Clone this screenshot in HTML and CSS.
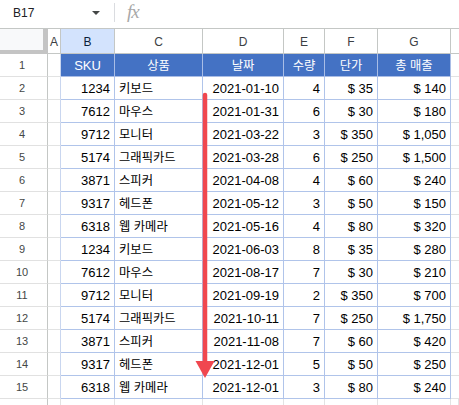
FILE: index.html
```html
<!DOCTYPE html>
<html lang="ko">
<head>
<meta charset="utf-8">
<title>Sheet</title>
<link rel="stylesheet" href="styles.css">
</head>
<body>
<div class="page">
  <div class="topbar">
    <div class="namebox">B17</div>
    <div class="dropdown"></div>
    <div class="sep"></div>
    <div class="fx">fx</div>
  </div>
  <div class="grid">
    <div class="corner"></div>
    <div class="colh">A</div>
    <div class="colh sel">B</div>
    <div class="colh">C</div>
    <div class="colh">D</div>
    <div class="colh">E</div>
    <div class="colh">F</div>
    <div class="colh">G</div>
    <div class="colh last"></div>

    <div class="rh">1</div><div class="ac"></div>
    <div class="th">SKU</div><div class="th ko">상품</div><div class="th ko">날짜</div><div class="th ko">수량</div><div class="th ko">단가</div><div class="th ko">총 매출</div>
    <div class="hc"></div>

    <div class="rh">2</div><div class="ac"></div><div class="td n">1234</div><div class="td t ko">키보드</div><div class="td n">2021-01-10</div><div class="td n">4</div><div class="td n">$ 35</div><div class="td n">$ 140</div><div class="hc"></div>
    <div class="rh">3</div><div class="ac"></div><div class="td n">7612</div><div class="td t ko">마우스</div><div class="td n">2021-01-31</div><div class="td n">6</div><div class="td n">$ 30</div><div class="td n">$ 180</div><div class="hc"></div>
    <div class="rh">4</div><div class="ac"></div><div class="td n">9712</div><div class="td t ko">모니터</div><div class="td n">2021-03-22</div><div class="td n">3</div><div class="td n">$ 350</div><div class="td n">$ 1,050</div><div class="hc"></div>
    <div class="rh">5</div><div class="ac"></div><div class="td n">5174</div><div class="td t ko">그래픽카드</div><div class="td n">2021-03-28</div><div class="td n">6</div><div class="td n">$ 250</div><div class="td n">$ 1,500</div><div class="hc"></div>
    <div class="rh">6</div><div class="ac"></div><div class="td n">3871</div><div class="td t ko">스피커</div><div class="td n">2021-04-08</div><div class="td n">4</div><div class="td n">$ 60</div><div class="td n">$ 240</div><div class="hc"></div>
    <div class="rh">7</div><div class="ac"></div><div class="td n">9317</div><div class="td t ko">헤드폰</div><div class="td n">2021-05-12</div><div class="td n">3</div><div class="td n">$ 50</div><div class="td n">$ 150</div><div class="hc"></div>
    <div class="rh">8</div><div class="ac"></div><div class="td n">6318</div><div class="td t ko">웹 카메라</div><div class="td n">2021-05-16</div><div class="td n">4</div><div class="td n">$ 80</div><div class="td n">$ 320</div><div class="hc"></div>
    <div class="rh">9</div><div class="ac"></div><div class="td n">1234</div><div class="td t ko">키보드</div><div class="td n">2021-06-03</div><div class="td n">8</div><div class="td n">$ 35</div><div class="td n">$ 280</div><div class="hc"></div>
    <div class="rh">10</div><div class="ac"></div><div class="td n">7612</div><div class="td t ko">마우스</div><div class="td n">2021-08-17</div><div class="td n">7</div><div class="td n">$ 30</div><div class="td n">$ 210</div><div class="hc"></div>
    <div class="rh">11</div><div class="ac"></div><div class="td n">9712</div><div class="td t ko">모니터</div><div class="td n">2021-09-19</div><div class="td n">2</div><div class="td n">$ 350</div><div class="td n">$ 700</div><div class="hc"></div>
    <div class="rh">12</div><div class="ac"></div><div class="td n">5174</div><div class="td t ko">그래픽카드</div><div class="td n">2021-10-11</div><div class="td n">7</div><div class="td n">$ 250</div><div class="td n">$ 1,750</div><div class="hc"></div>
    <div class="rh">13</div><div class="ac"></div><div class="td n">3871</div><div class="td t ko">스피커</div><div class="td n">2021-11-08</div><div class="td n">7</div><div class="td n">$ 60</div><div class="td n">$ 420</div><div class="hc"></div>
    <div class="rh">14</div><div class="ac"></div><div class="td n">9317</div><div class="td t ko">헤드폰</div><div class="td n">2021-12-01</div><div class="td n">5</div><div class="td n">$ 50</div><div class="td n">$ 250</div><div class="hc"></div>
    <div class="rh">15</div><div class="ac"></div><div class="td n">6318</div><div class="td t ko">웹 카메라</div><div class="td n">2021-12-01</div><div class="td n">3</div><div class="td n">$ 80</div><div class="td n">$ 240</div><div class="hc"></div>

    <div class="rh"></div><div class="gc"></div><div class="gc"></div><div class="gc"></div><div class="gc"></div><div class="gc"></div><div class="gc"></div><div class="gc"></div><div class="gc"></div>
  </div>
  <svg class="arrow" width="24" height="292" viewBox="0 0 24 292" aria-hidden="true">
    <line x1="12" y1="6" x2="12" y2="275" stroke="#f0474f" stroke-width="4.5" stroke-linecap="round"/>
    <polygon points="2.5,272 21.5,272 12,289" fill="#f0474f"/>
  </svg>
</div>
</body>
</html>
```
FILE: styles.css
```css
html, body {
  margin: 0;
  padding: 0;
  background: #ffffff;
}
body {
  font-family: "Liberation Sans", Arial, "Noto Sans CJK KR", sans-serif;
  font-size: 13px;
  color: #000000;
  overflow: hidden;
}
.page {
  position: relative;
  width: 459px;
  height: 405px;
  overflow: hidden;
}
.topbar {
  box-sizing: border-box;
  height: 29px;
  border-bottom: 1px solid #c4c7c5;
  display: flex;
  align-items: center;
}
.namebox {
  margin-left: 13px;
  width: 79px;
  font-size: 12px;
  color: #202124;
  margin-top: -2px;
}
.dropdown {
  width: 0;
  height: 0;
  border-left: 4px solid transparent;
  border-right: 4px solid transparent;
  border-top: 4px solid #444746;
  margin-top: -2px;
}
.sep {
  width: 1px;
  height: 19px;
  background: #dadce0;
  margin-left: 14px;
  margin-top: -3px;
}
.fx {
  margin-left: 12px;
  font-family: "Liberation Serif", "Times New Roman", serif;
  font-style: italic;
  font-size: 19px;
  color: #a8a8a8;
  margin-top: -4px;
  letter-spacing: -1px;
}
.grid {
  display: grid;
  grid-template-columns: 48px 13px 54px 88px 81px 41px 53px 73px 1fr;
  grid-template-rows: 25px repeat(15, 23px) 23px;
}
.grid > div {
  box-sizing: border-box;
  display: flex;
  align-items: center;
  overflow: hidden;
  white-space: nowrap;
}
.corner {
  background: #f8f9fa;
  border-right: 5px solid #c4c4c4;
  border-bottom: 4px solid #c4c4c4;
}
.colh {
  justify-content: center;
  font-size: 12px;
  color: #3c4043;
  border-right: 1px solid #c4c7c5;
  border-bottom: 1px solid #c4c7c5;
  padding-top: 1px;
}
.colh.sel {
  background: #d3e3fd;
  color: #0b1f3a;
}
.colh.last {
  border-right: none;
}
.rh {
  justify-content: center;
  font-size: 11px;
  color: #444746;
  border-right: 1px solid #c4c7c5;
  border-bottom: 1px solid #e1e1e1;
  padding-right: 3px;
}
.ac {
  border-right: 1px solid #c9d6ef;
  border-bottom: 1px solid #e2e3e3;
}
.th {
  background: #4472c4;
  color: #ffffff;
  justify-content: center;
  border-right: 1px solid #a9bde6;
  border-bottom: 1px solid #a9bde6;
}
.td {
  border-right: 1px solid #b0c4ea;
  border-bottom: 1px solid #b0c4ea;
  padding: 0 3px;
}
.td.n {
  justify-content: flex-end;
  padding-right: 4px;
}
.td.t {
  justify-content: flex-start;
  padding-left: 4px;
}
.ko {
  font-family: "Noto Sans CJK KR", "Liberation Sans", sans-serif;
  font-size: 12.3px;
  line-height: 16px;
}
.hc {
  border-bottom: 1px solid #e2e3e3;
}
.gc {
  border-right: 1px solid #e2e3e3;
  border-bottom: 1px solid #e2e3e3;
}
.arrow {
  position: absolute;
  left: 193px;
  top: 89px;
}
```
